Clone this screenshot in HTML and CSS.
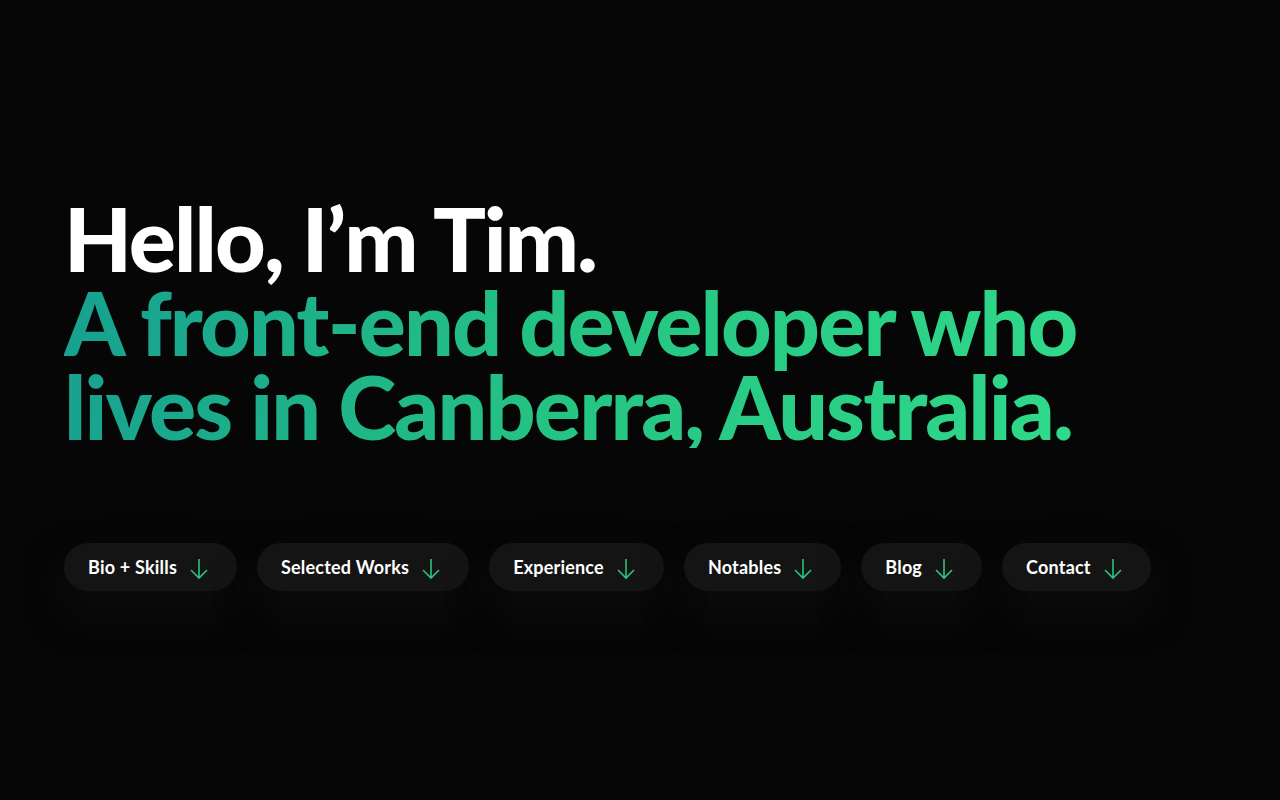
FILE: index.html
```html
<!DOCTYPE html>
<html lang="en">
<head>
<meta charset="utf-8">
<title>Tim</title>
<link rel="stylesheet" href="styles.css">
</head>
<body>
<main class="hero">
  <h1 class="headline">
    <span class="hello">Hello, I’m Tim.</span>
    <span class="tagline">A front-end developer who<br>lives in Canberra, Australia.</span>
  </h1>
  <nav class="links">
    <a class="pill" href="#bio">Bio + Skills <svg class="arrow" viewBox="0 0 20 22"><path d="M10 1v19M2 12l8 8 8-8"/></svg></a>
    <a class="pill" href="#works">Selected Works <svg class="arrow" viewBox="0 0 20 22"><path d="M10 1v19M2 12l8 8 8-8"/></svg></a>
    <a class="pill" href="#experience">Experience <svg class="arrow" viewBox="0 0 20 22"><path d="M10 1v19M2 12l8 8 8-8"/></svg></a>
    <a class="pill" href="#notables">Notables <svg class="arrow" viewBox="0 0 20 22"><path d="M10 1v19M2 12l8 8 8-8"/></svg></a>
    <a class="pill" href="#blog">Blog <svg class="arrow" viewBox="0 0 20 22"><path d="M10 1v19M2 12l8 8 8-8"/></svg></a>
    <a class="pill" href="#contact">Contact <svg class="arrow" viewBox="0 0 20 22"><path d="M10 1v19M2 12l8 8 8-8"/></svg></a>
  </nav>
</main>
</body>
</html>
```
FILE: styles.css
```css
html, body {
  margin: 0;
  padding: 0;
  background: #060606;
  height: 100%;
}
body {
  font-family: "Lato", "Noto Sans", sans-serif;
  color: #fff;
}
.hero {
  padding: 196px 64px 0 64px;
}
.headline {
  margin: 0;
  font-weight: 900;
  font-size: 88px;
  line-height: 84px;
  letter-spacing: -1.9px;
}
.hello {
  display: block;
  color: #fff;
}
.tagline {
  display: inline-block;
  background: linear-gradient(100deg, #17a090 0%, #25c483 50%, #30d98a 100%);
  -webkit-background-clip: text;
  background-clip: text;
  color: transparent;
}
.links {
  display: flex;
  gap: 20px;
  margin-top: 95px;
}
.pill {
  display: flex;
  align-items: center;
  gap: 12px;
  height: 48px;
  padding: 0 28px 0 24px;
  border-radius: 24px;
  background: #141414;
  color: #fff;
  text-decoration: none;
  font-size: 18px;
  font-weight: 700;
  letter-spacing: 0.2px;
  box-shadow: 0 20px 40px rgba(20,20,20,0.5);
}
.arrow {
  width: 20px;
  height: 22px;
  fill: none;
  stroke: #2ac37f;
  stroke-width: 1.6;
  margin-top: 4px;
}
```
